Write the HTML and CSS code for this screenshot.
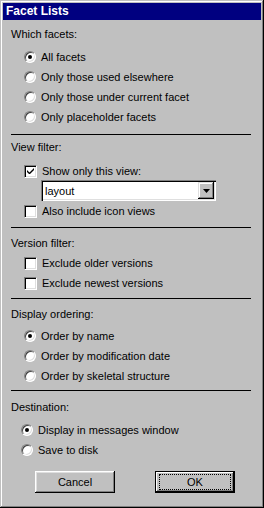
FILE: index.html
```html
<!DOCTYPE html>
<html>
<head>
    <title>Facet Lists</title>
    <link rel="stylesheet" href="styles.css">
</head>
<body>
    <div class="dialog">
        <div class="titlebar">Facet Lists</div>
        <div class="content">
            <div class="label facets">Which facets:</div>
            <div class="options">
                <div class="row"><span class="radio on"></span>All facets</div>
                <div class="row"><span class="radio"></span>Only those used elsewhere</div>
                <div class="row"><span class="radio"></span>Only those under current facet</div>
                <div class="row"><span class="radio"></span>Only placeholder facets</div>
            </div>
            <div class="sep s1"></div>

            <div class="label view">View filter:</div>
            <div class="options view-opts">
                <div class="row short"><span class="check on">
                    <svg width="9" height="9" viewBox="0 0 9 9"><path d="M1 3v2l2 2h1l4-4V1L3.5 5.5z" fill="#000"/></svg>
                </span>Show only this view:</div>
                <div class="combo">
                    <span class="combo-text">layout</span>
                    <span class="combo-btn">
                        <svg width="7" height="4" viewBox="0 0 7 4"><path d="M0 0h7L3.5 4z" fill="#000"/></svg>
                    </span>
                </div>
                <div class="row"><span class="check"></span>Also include icon views</div>
            </div>
            <div class="sep s2"></div>

            <div class="label version">Version filter:</div>
            <div class="options version-opts">
                <div class="row"><span class="check"></span>Exclude older versions</div>
                <div class="row"><span class="check"></span>Exclude newest versions</div>
            </div>
            <div class="sep s3"></div>

            <div class="label ordering">Display ordering:</div>
            <div class="options ordering-opts">
                <div class="row"><span class="radio on"></span>Order by name</div>
                <div class="row"><span class="radio"></span>Order by modification date</div>
                <div class="row"><span class="radio"></span>Order by skeletal structure</div>
            </div>
            <div class="sep s4"></div>

            <div class="label dest">Destination:</div>
            <div class="options dest-opts">
                <div class="row"><span class="radio on"></span>Display in messages window</div>
                <div class="row"><span class="radio"></span>Save to disk</div>
            </div>

            <div class="buttons">
                <div class="btn">Cancel</div>
                <div class="btn default"><span class="focus">OK</span></div>
            </div>
        </div>
    </div>
</body>
</html>
```

FILE: styles.css
```css
html, body {
    margin: 0;
    padding: 0;
}

body {
    background-color: #c0c0c0;
    font-family: "Liberation Sans", Arial, sans-serif;
    font-size: 11px;
    color: #000;
}

.dialog {
    box-sizing: border-box;
    width: 264px;
    height: 508px;
    padding: 3px;
    background-color: #c0c0c0;
    box-shadow: inset -1px -1px #000, inset 1px 1px #c0c0c0,
                inset -2px -2px #808080, inset 2px 2px #fff;
}

.titlebar {
    height: 17px;
    line-height: 17px;
    padding-left: 3px;
    background-color: #000080;
    color: #fff;
    font-size: 12px;
    font-weight: bold;
}

.content {
    padding: 0 10px 0 8px;
}

.label {
    height: 14px;
    line-height: 14px;
}

.facets { margin-top: 7px; }
.view { margin-top: 5px; }
.version { margin-top: 8px; }
.ordering { margin-top: 8px; }
.dest { margin-top: 9px; }

.options {
    margin-top: 6px;
    padding-left: 13px;
}
.view-opts { margin-top: 8px; }
.version-opts { margin-top: 3px; }
.ordering-opts { margin-top: 5px; }
.dest-opts { padding-left: 10px; }

.row {
    display: flex;
    align-items: center;
    height: 20px;
    white-space: nowrap;
}
.row.short {
    height: 18px;
}

.radio {
    box-sizing: border-box;
    position: relative;
    width: 12px;
    height: 12px;
    margin-right: 5px;
    border-radius: 50%;
    background-color: #fff;
    border: 1px solid;
    border-color: #808080 #fff #fff #808080;
    box-shadow: inset 1px 1px #404040, inset -1px -1px #dfdfdf;
}
.radio.on::after {
    content: "";
    position: absolute;
    left: 3px;
    top: 3px;
    width: 4px;
    height: 4px;
    border-radius: 50%;
    background-color: #000;
}

.check {
    box-sizing: border-box;
    display: flex;
    align-items: center;
    justify-content: center;
    width: 13px;
    height: 13px;
    margin-right: 5px;
    background-color: #fff;
    border: 1px solid;
    border-color: #808080 #fff #fff #808080;
    box-shadow: inset 1px 1px #000, inset -1px -1px #dfdfdf;
}
.check svg {
    display: block;
}

.combo {
    box-sizing: border-box;
    display: flex;
    align-items: center;
    width: 175px;
    height: 21px;
    margin-left: 17px;
    padding: 2px;
    background-color: #fff;
    box-shadow: inset 1px 1px #808080, inset 2px 2px #000,
                inset -1px -1px #fff, inset -2px -2px #dfdfdf;
}
.combo-text {
    flex: 1;
    padding-left: 2px;
}
.combo-btn {
    display: flex;
    align-items: center;
    justify-content: center;
    width: 16px;
    height: 17px;
    background-color: #c0c0c0;
    box-shadow: inset -1px -1px #000, inset 1px 1px #dfdfdf,
                inset -2px -2px #808080, inset 2px 2px #fff;
}

.sep {
    height: 1px;
    background-color: #000;
}
.s1 { margin-top: 7px; }
.s2 { margin-top: 6px; }
.s3 { margin-top: 5px; }
.s4 { margin-top: 4px; }

.buttons {
    display: flex;
    gap: 40px;
    margin-top: 11px;
    padding-left: 24px;
}

.btn {
    box-sizing: border-box;
    display: flex;
    align-items: center;
    justify-content: center;
    width: 80px;
    height: 22px;
    background-color: #c0c0c0;
    box-shadow: inset -1px -1px #000, inset 1px 1px #fff,
                inset -2px -2px #808080, inset 2px 2px #dfdfdf;
}
.btn.default {
    box-shadow: inset 0 0 0 1px #000, inset -2px -2px #000, inset 2px 2px #fff,
                inset -3px -3px #808080;
}
.focus {
    box-sizing: border-box;
    display: flex;
    align-items: center;
    justify-content: center;
    width: 72px;
    height: 16px;
    border: 1px dotted #000;
}
```
